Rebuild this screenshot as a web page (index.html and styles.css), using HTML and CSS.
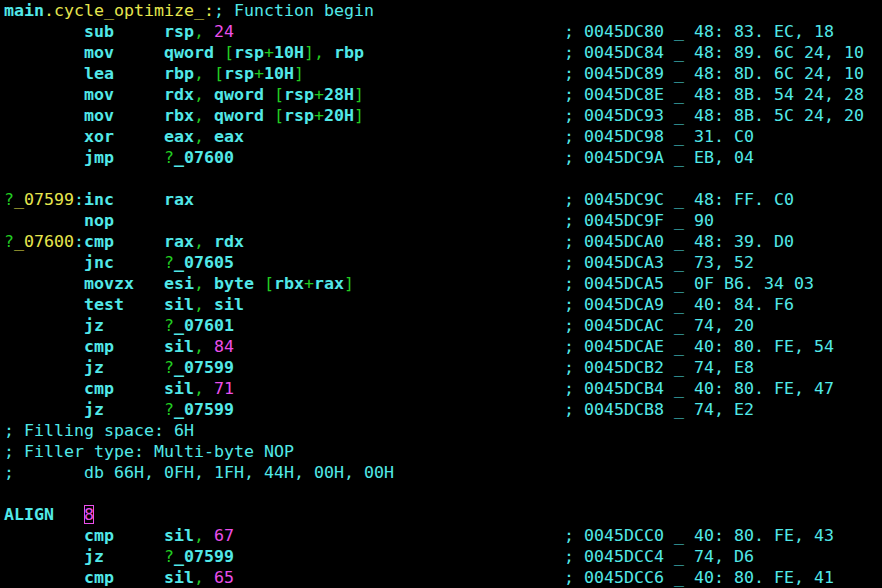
FILE: index.html
```html
<!DOCTYPE html>
<html>
<head>
<meta charset="utf-8">
<link rel="stylesheet" href="styles.css">
</head>
<body>
<div class="term">
  <div class="row"><span class="b c">main</span><span class="y">.cycle_optimize_:</span><span class="c">; Function begin</span></div>
  <div class="row"><span class="lab"></span><span class="mn b c">sub</span><span class="arg b c">rsp<span class="g">,</span> <span class="m">24</span></span><span class="c">; 0045DC80 _ 48: 83. EC, 18</span></div>
  <div class="row"><span class="lab"></span><span class="mn b c">mov</span><span class="arg b c">qword <span class="g">[</span>rsp<span class="g">+</span>10H<span class="g">],</span> rbp</span><span class="c">; 0045DC84 _ 48: 89. 6C 24, 10</span></div>
  <div class="row"><span class="lab"></span><span class="mn b c">lea</span><span class="arg b c">rbp<span class="g">,</span> <span class="g">[</span>rsp<span class="g">+</span>10H<span class="g">]</span></span><span class="c">; 0045DC89 _ 48: 8D. 6C 24, 10</span></div>
  <div class="row"><span class="lab"></span><span class="mn b c">mov</span><span class="arg b c">rdx<span class="g">,</span> qword <span class="g">[</span>rsp<span class="g">+</span>28H<span class="g">]</span></span><span class="c">; 0045DC8E _ 48: 8B. 54 24, 28</span></div>
  <div class="row"><span class="lab"></span><span class="mn b c">mov</span><span class="arg b c">rbx<span class="g">,</span> qword <span class="g">[</span>rsp<span class="g">+</span>20H<span class="g">]</span></span><span class="c">; 0045DC93 _ 48: 8B. 5C 24, 20</span></div>
  <div class="row"><span class="lab"></span><span class="mn b c">xor</span><span class="arg b c">eax<span class="g">,</span> eax</span><span class="c">; 0045DC98 _ 31. C0</span></div>
  <div class="row"><span class="lab"></span><span class="mn b c">jmp</span><span class="arg b c"><span class="g">?</span>_07600</span><span class="c">; 0045DC9A _ EB, 04</span></div>
  <div class="row"></div>
  <div class="row"><span class="lab"><span class="g">?</span><span class="y">_07599</span><span class="c">:</span></span><span class="mn b c">inc</span><span class="arg b c">rax</span><span class="c">; 0045DC9C _ 48: FF. C0</span></div>
  <div class="row"><span class="lab"></span><span class="mn b c">nop</span><span class="arg"></span><span class="c">; 0045DC9F _ 90</span></div>
  <div class="row"><span class="lab"><span class="g">?</span><span class="y">_07600</span><span class="c">:</span></span><span class="mn b c">cmp</span><span class="arg b c">rax<span class="g">,</span> rdx</span><span class="c">; 0045DCA0 _ 48: 39. D0</span></div>
  <div class="row"><span class="lab"></span><span class="mn b c">jnc</span><span class="arg b c"><span class="g">?</span>_07605</span><span class="c">; 0045DCA3 _ 73, 52</span></div>
  <div class="row"><span class="lab"></span><span class="mn b c">movzx</span><span class="arg b c">esi<span class="g">,</span> byte <span class="g">[</span>rbx<span class="g">+</span>rax<span class="g">]</span></span><span class="c">; 0045DCA5 _ 0F B6. 34 03</span></div>
  <div class="row"><span class="lab"></span><span class="mn b c">test</span><span class="arg b c">sil<span class="g">,</span> sil</span><span class="c">; 0045DCA9 _ 40: 84. F6</span></div>
  <div class="row"><span class="lab"></span><span class="mn b c">jz</span><span class="arg b c"><span class="g">?</span>_07601</span><span class="c">; 0045DCAC _ 74, 20</span></div>
  <div class="row"><span class="lab"></span><span class="mn b c">cmp</span><span class="arg b c">sil<span class="g">,</span> <span class="m">84</span></span><span class="c">; 0045DCAE _ 40: 80. FE, 54</span></div>
  <div class="row"><span class="lab"></span><span class="mn b c">jz</span><span class="arg b c"><span class="g">?</span>_07599</span><span class="c">; 0045DCB2 _ 74, E8</span></div>
  <div class="row"><span class="lab"></span><span class="mn b c">cmp</span><span class="arg b c">sil<span class="g">,</span> <span class="m">71</span></span><span class="c">; 0045DCB4 _ 40: 80. FE, 47</span></div>
  <div class="row"><span class="lab"></span><span class="mn b c">jz</span><span class="arg b c"><span class="g">?</span>_07599</span><span class="c">; 0045DCB8 _ 74, E2</span></div>
  <div class="row"><span class="c">; Filling space: 6H</span></div>
  <div class="row"><span class="c">; Filler type: Multi-byte NOP</span></div>
  <div class="row"><span class="lab c">;</span><span class="c">db 66H, 0FH, 1FH, 44H, 00H, 00H</span></div>
  <div class="row"></div>
  <div class="row"><span class="lab b c">ALIGN</span><span class="cur m">8</span></div>
  <div class="row"><span class="lab"></span><span class="mn b c">cmp</span><span class="arg b c">sil<span class="g">,</span> <span class="m">67</span></span><span class="c">; 0045DCC0 _ 40: 80. FE, 43</span></div>
  <div class="row"><span class="lab"></span><span class="mn b c">jz</span><span class="arg b c"><span class="g">?</span>_07599</span><span class="c">; 0045DCC4 _ 74, D6</span></div>
  <div class="row"><span class="lab"></span><span class="mn b c">cmp</span><span class="arg b c">sil<span class="g">,</span> <span class="m">65</span></span><span class="c">; 0045DCC6 _ 40: 80. FE, 41</span></div>
</div>
</body>
</html>
```
FILE: styles.css
```css
html, body {
  margin: 0;
  padding: 0;
  background: #000;
  overflow: hidden;
}
.term {
  padding-left: 4px;
  font-family: "DejaVu Sans Mono", monospace;
  font-size: 16.61px;
  line-height: 21px;
  color: #52e8e8;
}
.row {
  display: flex;
  height: 21px;
  white-space: pre;
}
.lab {
  display: inline-block;
  width: 80px;
  flex: none;
}
.mn {
  display: inline-block;
  width: 80px;
  flex: none;
}
.arg {
  display: inline-block;
  width: 400px;
  flex: none;
}
.b { font-weight: bold; }
.c { color: #52e8e8; }
.y { color: #e6e64e; font-weight: normal; }
.g { color: #22cc22; font-weight: normal; }
.m { color: #ea4fea; font-weight: normal; }
.cur {
  display: inline-block;
  height: 19px;
  line-height: 19px;
  margin-top: 1px;
  outline: 1px solid #ea4fea;
  outline-offset: -1px;
}
```
